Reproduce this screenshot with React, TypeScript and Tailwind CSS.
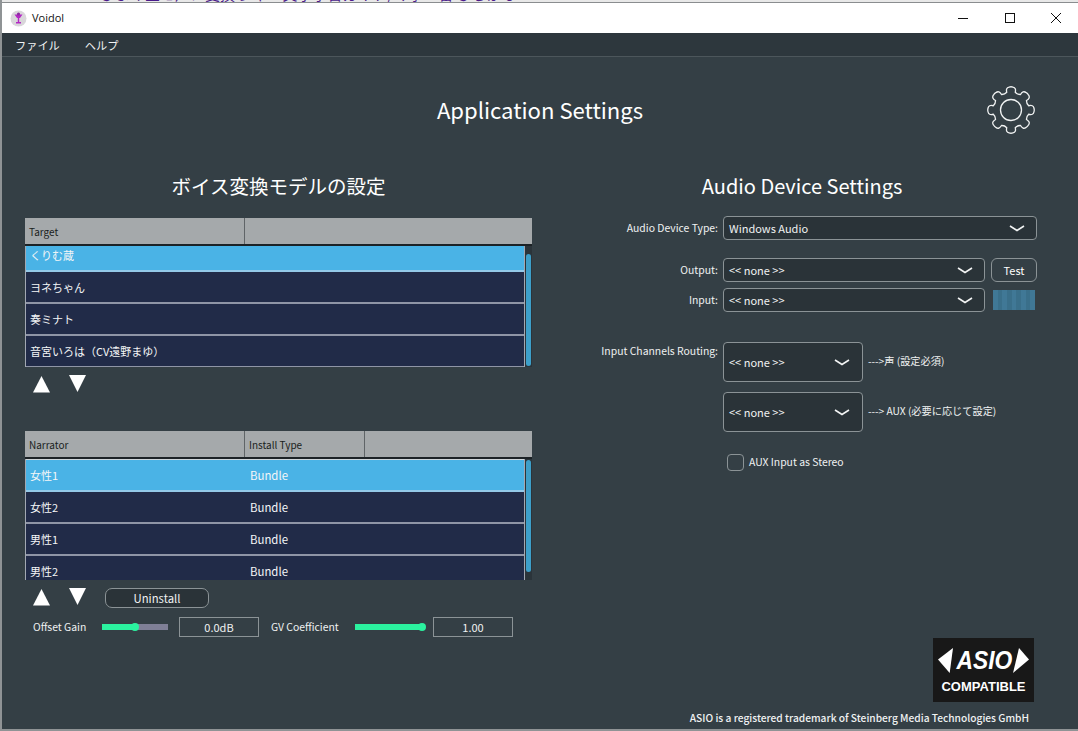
import React from "react";

const gearPath = (() => {
  const cx = 24, cy = 24, ro = 23, ri = 18.2;
  const pts: string[] = [];
  const pol = (r: number, a: number) => `${(cx + r * Math.cos(a)).toFixed(2)} ${(cy + r * Math.sin(a)).toFixed(2)}`;
  const n = 8;
  const step = (Math.PI * 2) / n;
  for (let i = 0; i < n; i++) {
    const a = -Math.PI / 2 + i * step;
    const t = step * 0.2;
    const w = step * 0.3;
    if (i === 0) pts.push(`M${pol(ri, a - w)}`);
    pts.push(`Q${pol(ro, a - w)} ${pol(ro, a - t * 0.55)}`);
    pts.push(`Q${pol(ro + 0.6, a)} ${pol(ro, a + t * 0.55)}`);
    pts.push(`Q${pol(ro, a + w)} ${pol(ri, a + w)}`);
    pts.push(`Q${pol(ri - 1.6, a + step / 2)} ${pol(ri, a + step - w)}`);
  }
  return pts.join(" ") + "Z";
})();

const Chevron = ({ cls = "" }: { cls?: string }) => (
  <svg width="16" height="7" viewBox="0 0 16 7" className={cls}>
    <path d="M1 1 L8 5.5 L15 1" fill="none" stroke="#f2f4f4" strokeWidth="1.6" />
  </svg>
);

const Select = ({ label, cls, chev = "mr-[10px]" }: { label: string; cls: string; chev?: string }) => (
  <div className={`flex items-center justify-between rounded-[4px] border border-[#8b9396] bg-[#2a3338] pl-[5px] text-[11px] text-[#f0f2f2] ${cls}`}>
    <span className="pt-[1px]">{label}</span>
    <Chevron cls={chev} />
  </div>
);

const Arrows = ({ cls = "" }: { cls?: string }) => (
  <div className={`flex w-[80px] shrink-0 gap-[19px] pl-[8px] ${cls}`}>
    <svg width="17" height="17" viewBox="0 0 17 17" className="mt-[1px]"><path d="M8.5 0 L17 16.5 L0 16.5Z" fill="#fff" /></svg>
    <svg width="17" height="17" viewBox="0 0 17 17"><path d="M0 0 L17 0 L8.5 17Z" fill="#fff" /></svg>
  </div>
);

type Row = { name: string; type?: string; sel?: boolean };

const ListRow = ({ name, type, sel }: Row) => (
  <div className={`flex h-[32px] shrink-0 items-center border-b-2 pl-[4px] pt-[1px] text-[11px] text-[#f4f6f7] ${sel ? "border-b-[#93c9e8] bg-[#4ab3e6]" : "border-b-[#8f95a6] bg-[#212b48]"}`}>
    <span className="w-[220px] shrink-0">{name}</span>
    {type && <span className="pt-[1px] text-[11.4px]">{type}</span>}
  </div>
);

const Table = ({ heads, rows, h, shift, thumb }: { heads: { t: string; w: string }[]; rows: Row[]; h: string; shift: string; thumb: string }) => (
  <div className="w-[507px]">
    <div className="flex h-[28px] border-b-2 border-b-[#1c2226] bg-[#a5a9ab] text-[10px] text-[#1a1e20]">
      {heads.map((c) => (
        <div key={c.t} className={`flex items-center border-r border-r-[#5f6467] pl-[4px] ${c.w}`}>{c.t}</div>
      ))}
    </div>
    <div className={`flex ${h}`}>
      <div className="w-[500px] overflow-hidden border-x border-x-[#a2a8b2]">
        <div className={shift}>
          {rows.map((r) => <ListRow key={r.name} {...r} />)}
        </div>
      </div>
      <div className="flex-1 bg-[#2b343a] pl-[1px]">
        <div className={`w-[5px] rounded-full bg-[#3d9fc9] ${thumb}`} />
      </div>
    </div>
  </div>
);

const Slider = ({ w, pct, track }: { w: string; pct: string; track: string }) => (
  <div className={`relative h-[6px] ${w} ${track}`}>
    <div className={`relative h-full bg-[#2bf29f] ${pct}`}>
      <div className="absolute right-[-4px] top-[-1px] h-[8px] w-[8px] rounded-full bg-[#2bf29f]" />
    </div>
  </div>
);

const Box = ({ v, cls }: { v: string; cls: string }) => (
  <div className={`flex h-[20px] w-[80px] items-center justify-center border border-[#8b9396] text-[11px] text-[#f0f2f2] ${cls}`}>{v}</div>
);

export default function App() {
  const meter = [0, 1, 2, 3, 4, 5, 6, 7, 8];
  return (
    <div className="flex h-[731px] w-[1078px] flex-col overflow-hidden border-l-2 border-l-[#8f9395] bg-[#343f45] text-white" style={{ fontFamily: '"Noto Sans CJK JP", "Noto Sans", sans-serif' }}>
      <div className="h-[3px] overflow-hidden border-b border-b-[#8a8d8f] bg-[#e8e8e8] pl-[98px]">
        <div className="-mt-[14px] whitespace-nowrap text-[15px] leading-[16px] text-[#4a1a8a]">ひまキ宝ヒ声ノ変換 ジャ一文字学習ガイド/マ事一番 ひらがな</div>
      </div>
      <div className="flex h-[30px] items-center bg-white text-[#111]">
        <svg width="17" height="17" viewBox="0 0 17 17" className="ml-[8px]">
          <circle cx="8.5" cy="8.5" r="8" fill="#d9d6da" />
          <path d="M4.5 4.5 H12.5 L10 8 H9.2 V12 H11 V13.5 H6 V12 H7.8 V8 H7Z" fill="#b327c4" />
          <circle cx="8.5" cy="4" r="1.6" fill="#8a2aa0" />
        </svg>
        <span className="ml-[5px] text-[11px]" style={{ fontFamily: '"Open Sans", sans-serif' }}>Voidol</span>
        <div className="ml-auto flex items-center">
          <svg width="12" height="12" viewBox="0 0 12 12" className="mr-[35px]"><path d="M1 6.5 H11" stroke="#111" strokeWidth="1" /></svg>
          <svg width="12" height="12" viewBox="0 0 12 12" className="mr-[34px]"><rect x="1.5" y="1.5" width="9" height="9" fill="none" stroke="#111" strokeWidth="1" /></svg>
          <svg width="12" height="12" viewBox="0 0 12 12" className="mr-[16px]"><path d="M1 1 L11 11 M11 1 L1 11" stroke="#111" strokeWidth="1" /></svg>
        </div>
      </div>
      <div className="flex h-[24px] items-center border-b border-b-[#4c565b] bg-[#2d373d] pl-[13px] pt-[1px] text-[11.2px] text-[#f2f4f4]">
        <span>ファイル</span>
        <span className="ml-[25px]">ヘルプ</span>
      </div>

      <div className="relative flex h-[68px] items-end justify-center">
        <h1 className="text-[22.1px] leading-[32px]">Application Settings</h1>
        <svg width="48" height="48" viewBox="0 0 48 48" className="absolute right-[43px] top-[29px]">
          <path d={gearPath} fill="none" stroke="#f0f2f2" strokeWidth="1.3" />
          <circle cx="24" cy="24" r="10.5" fill="none" stroke="#f0f2f2" strokeWidth="1.3" />
        </svg>
      </div>

      <div className="flex flex-1">
        <div className="w-[598px] pl-[23px] pt-[46px]">
          <h2 className="w-[507px] text-center text-[19.5px] leading-[30px]">ボイス変換モデルの設定</h2>
          <div className="h-[17px]" />
          <Table
            heads={[{ t: "Target", w: "w-[220px]" }]}
            rows={[{ name: "くりむ蔵", sel: true }, { name: "ヨネちゃん" }, { name: "奏ミナト" }, { name: "音宮いろは（CV遠野まゆ）" }]}
            h="h-[121px]"
            shift="-mt-[6px]"
            thumb="mt-[8px] h-[112px]"
          />
          <Arrows cls="pt-[8px]" />
          <div className="h-[38px]" />
          <Table
            heads={[{ t: "Narrator", w: "w-[220px]" }, { t: "Install Type", w: "w-[120px]" }]}
            rows={[{ name: "女性1", type: "Bundle", sel: true }, { name: "女性2", type: "Bundle" }, { name: "男性1", type: "Bundle" }, { name: "男性2", type: "Bundle" }]}
            h="h-[121px]"
            shift="border-t border-t-[#cfd6da]"
            thumb="mt-[1px] h-[112px]"
          />
          <div className="flex items-start pt-[8px]">
            <Arrows />
            <div className="flex h-[20px] w-[104px] items-center justify-center rounded-[7px] border border-[#8b9396] bg-[#2a3338] text-[11.3px] text-[#f0f2f2]">Uninstall</div>
          </div>
          <div className="flex items-center pl-[8px] pt-[9px] text-[10.4px] text-[#f0f2f2]">
            <span className="w-[69px]">Offset Gain</span>
            <Slider w="w-[66px]" pct="w-[50%]" track="bg-[#7f7f96]" />
            <Box v="0.0dB" cls="ml-[11px]" />
            <span className="ml-[12px] w-[84px]">GV Coefficient</span>
            <Slider w="w-[67px]" pct="w-full" track="bg-[#2bf29f]" />
            <Box v="1.00" cls="ml-[11px]" />
          </div>
        </div>

        <div className="flex flex-1 flex-col pt-[46px]">
          <h2 className="w-[404px] text-center text-[20px] leading-[30px]">Audio Device Settings</h2>
          <div className="mt-[15px] flex items-center">
            <span className="w-[118px] pb-[1px] text-right text-[10.4px] text-[#f0f2f2]">Audio Device Type:</span>
            <Select label="Windows Audio" cls="ml-[5px] h-[24px] w-[314px]" chev="mr-[11px]" />
          </div>
          <div className="mt-[18px] flex items-center">
            <span className="w-[118px] pb-[1px] text-right text-[10.4px] text-[#f0f2f2]">Output:</span>
            <Select label="<< none >>" cls="ml-[5px] h-[24px] w-[262px]" chev="mr-[11px]" />
            <div className="ml-[6px] flex h-[24px] w-[46px] items-center justify-center rounded-[6px] border border-[#8b9396] bg-[#343f45] text-[11px]">Test</div>
          </div>
          <div className="mt-[6px] flex items-center">
            <span className="w-[118px] pb-[1px] text-right text-[10.4px] text-[#f0f2f2]">Input:</span>
            <Select label="<< none >>" cls="ml-[5px] h-[24px] w-[262px]" chev="mr-[11px]" />
            <div className="ml-[8px] flex h-[20px] w-[42px]">
              {meter.map((i) => (
                <div key={i} className={`flex-1 ${i % 2 ? "bg-[#3a6f8a]" : "bg-[#407896]"}`} />
              ))}
            </div>
          </div>
          <div className="mt-[30px] flex items-start">
            <span className="w-[118px] whitespace-nowrap pt-[1px] text-right text-[10.4px] text-[#f0f2f2]">Input Channels Routing:</span>
            <Select label="<< none >>" cls="ml-[5px] h-[40px] w-[140px]" chev="mr-[12px]" />
            <span className="ml-[5px] pt-[11px] text-[10.2px] text-[#f0f2f2]">---&gt;声 (設定必須)</span>
          </div>
          <div className="mt-[10px] flex items-start">
            <div className="w-[118px]" />
            <Select label="<< none >>" cls="ml-[5px] h-[40px] w-[140px]" chev="mr-[12px]" />
            <span className="ml-[5px] pt-[11px] text-[10.2px] text-[#f0f2f2]">---&gt; AUX (必要に応じて設定)</span>
          </div>
          <div className="ml-[127px] mt-[22px] flex items-center">
            <div className="h-[17px] w-[17px] rounded-[4px] border border-[#8b9396]" />
            <span className="ml-[5px] pb-[1px] text-[10.4px] text-[#f0f2f2]">AUX Input as Stereo</span>
          </div>
          <div className="mt-auto flex flex-col items-end pb-[3px] pr-[43px]">
            <div className="mr-[1px] flex h-[64px] w-[101px] flex-col items-center bg-[#181818] pt-[10px]">
              <div className="flex h-[25px] items-center">
                <svg width="15" height="25" viewBox="0 0 15 25"><path d="M15 0 L11.7 25 L0 11.5Z" fill="#fff" /></svg>
                <span className="-ml-[1px] -mr-[3px] scale-x-[0.86] text-[26.5px] font-bold italic leading-[25px] text-white" style={{ fontFamily: '"Liberation Sans", sans-serif' }}>ASIO</span>
                <svg width="16" height="25" viewBox="0 0 16 25"><path d="M6 0 L16 11.5 L0 25Z" fill="#fff" /></svg>
              </div>
              <span className="mt-[7px] text-[13px] font-bold leading-[14px] text-white" style={{ fontFamily: '"Liberation Sans", sans-serif' }}>COMPATIBLE</span>
            </div>
            <span className="mr-[6px] mt-[8px] whitespace-nowrap text-[10.2px] font-medium leading-[16px] text-[#f0f2f2]">ASIO is a registered trademark of Steinberg Media Technologies GmbH</span>
          </div>
        </div>
      </div>
      <div className="h-[2px] bg-[#8f9395]" />
    </div>
  );
}
